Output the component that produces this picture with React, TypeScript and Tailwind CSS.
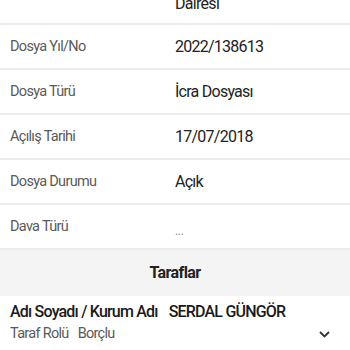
import React from "react";

const rows = [
  { label: "Dosya Yıl/No", value: "2022/138613" },
  { label: "Dosya Türü", value: "İcra Dosyası" },
  { label: "Açılış Tarihi", value: "17/07/2018" },
  { label: "Dosya Durumu", value: "Açık" },
  { label: "Dava Türü", value: "...", small: true },
];

export default function App() {
  return (
    <div className="w-[350px] h-[350px] overflow-hidden bg-white" style={{ fontFamily: "Roboto, 'Liberation Sans', sans-serif" }}>
      <div className="h-[25px] border-b-[2px] border-[#ececec] relative">
        <div className="absolute left-[175px] top-[-4.5px] leading-none text-[16px] tracking-[-0.7px] text-[#222]">Dairesi</div>
      </div>
      {rows.map((r, i) => (
        <div key={i} className="h-[45px] flex items-center border-b-[2px] border-[#ececec]">
          <div className="w-[175px] pl-[10px] text-[14.5px] tracking-[-0.7px] text-[#5a5a5a]">{r.label}</div>
          <div className={r.small ? "text-[12px] tracking-[-0.3px] text-[#888] pt-[8px]" : "text-[16px] tracking-[-0.75px] text-[#222]"}>{r.value}</div>
        </div>
      ))}
      <div className="h-[46px] bg-[#f4f4f4] flex items-center justify-center text-[16px] tracking-[-0.6px] font-bold text-[#222]">
        Taraflar
      </div>
      <div className="flex items-end justify-between pr-[20px] pt-[4px]">
        <div className="pl-[10px]">
          <div className="flex gap-[11px] text-[16px] text-[#1a1a1a] font-medium tracking-[-0.8px] leading-[24px]">
            <span>Adı Soyadı / Kurum Adı</span>
            <span>SERDAL GÜNGÖR</span>
          </div>
          <div className="flex gap-[9px] text-[14.5px] tracking-[-0.7px] text-[#5a5a5a] leading-[20px]">
            <span>Taraf Rolü</span>
            <span>Borçlu</span>
          </div>
        </div>
        <svg width="11" height="7" viewBox="0 0 11 7" className="mb-[6px]">
          <path d="M1 1 L5.5 5.5 L10 1" fill="none" stroke="#333" strokeWidth="1.8" />
        </svg>
      </div>
    </div>
  );
}
